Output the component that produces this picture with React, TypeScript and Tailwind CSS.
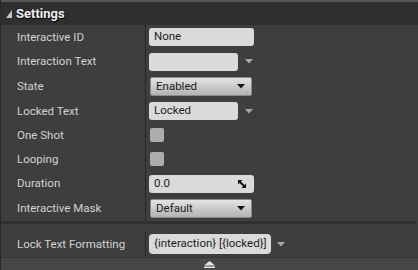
import React from "react";

const Arrow = ({ color = "#a8a8a8" }: { color?: string }) => (
  <svg width="8" height="5" viewBox="0 0 8 5" className="shrink-0">
    <polygon points="0,0 8,0 4,4.5" fill={color} />
  </svg>
);

const TextField = ({ text, w }: { text: string; w: string }) => (
  <div className={`h-[18px] ${w} rounded-[3px] bg-[#dadada] flex items-center px-[5px] text-[11.5px] text-[#1c1c1c]`}>
    {text}
  </div>
);

const Combo = ({ text }: { text: string }) => (
  <div className="h-[19px] w-[102px] ml-[1px] rounded-[2px] bg-gradient-to-b from-[#e4e4e4] to-[#b2b2b2] border border-[#8a8a8a] flex items-center justify-between pl-[5px] pr-[6px] text-[11.5px] text-[#1c1c1c]">
    <span>{text}</span>
    <Arrow color="#111" />
  </div>
);

const Check = () => <div className="w-[14px] h-[14px] ml-[1px] rounded-[2px] bg-[#adadad]" />;

const rows: { label: string; h: string; value: React.ReactNode }[] = [
  { label: "Interactive ID", h: "h-[24px]", value: <TextField text="None" w="w-[105px]" /> },
  {
    label: "Interaction Text",
    h: "h-[25px]",
    value: (
      <div className="flex items-center gap-[7px]">
        <TextField text="" w="w-[89px]" />
        <Arrow />
      </div>
    ),
  },
  { label: "State", h: "h-[25px]", value: <Combo text="Enabled" /> },
  {
    label: "Locked Text",
    h: "h-[24px]",
    value: (
      <div className="flex items-center gap-[7px]">
        <TextField text="Locked" w="w-[89px]" />
        <Arrow />
      </div>
    ),
  },
  { label: "One Shot", h: "h-[24px]", value: <Check /> },
  { label: "Looping", h: "h-[24px]", value: <Check /> },
  {
    label: "Duration",
    h: "h-[25px]",
    value: (
      <div className="h-[18px] w-[105px] rounded-[3px] bg-[#dadada] flex items-center justify-between pl-[5px] pr-[8px] text-[11.5px] text-[#1c1c1c]">
        <span>0.0</span>
        <svg width="8" height="8" viewBox="0 0 8 8">
          <polygon points="0,0 4.5,0 0,4.5" fill="#111" />
          <polygon points="8,8 3.5,8 8,3.5" fill="#111" />
          <line x1="1" y1="1" x2="7" y2="7" stroke="#111" strokeWidth="2" />
        </svg>
      </div>
    ),
  },
  { label: "Interactive Mask", h: "h-[25px]", value: <Combo text="Default" /> },
];

export default function App() {
  return (
    <div
      className="w-[418px] h-[270px] bg-[#3e3e3e] flex flex-col overflow-hidden border-l border-[#2a2a2a]"
      style={{ fontFamily: "Roboto, 'Liberation Sans', sans-serif" }}
    >
      <div className="h-[2px] bg-[#585858]" />
      <div className="h-[23px] bg-[#2f2f2f] flex items-center pl-[5px]">
        <svg width="6" height="8" viewBox="0 0 6 8" className="mr-[4px] mt-[1px]">
          <polygon points="6,0 6,8 0,8" fill="#c4c4c4" />
        </svg>
        <span
          className="text-[13px] font-bold text-[#f0f0f0]"
          style={{ textShadow: "1px 1px 1px #000" }}
        >
          Settings
        </span>
      </div>
      <div className="flex flex-col">
        {rows.map((r) => (
          <div key={r.label} className={`flex ${r.h}`}>
            <div className="w-[145px] pl-[16px] pt-[1px] flex items-center text-[11.5px] text-[#d2d2d2] border-r border-[#262626]">
              {r.label}
            </div>
            <div className="flex items-center pl-[3px]">{r.value}</div>
          </div>
        ))}
      </div>
      <div className="h-[1px] bg-[#333333] mr-[2px]" />
      <div className="h-[2px] bg-gradient-to-b from-[#2a2a2a] to-[#363636] mr-[2px]" />
      <div className="flex h-[24px] mt-[8px]">
        <div className="w-[145px] pl-[16px] pt-[1px] flex items-center text-[11.5px] text-[#d2d2d2] border-r border-[#262626]">
          Lock Text Formatting
        </div>
        <div className="flex items-center pl-[3px] gap-[6px]">
          <div className="h-[20px] w-[122px] rounded-[4px] bg-[#dadada] flex items-center px-[5px] text-[11.5px] text-[#1c1c1c] whitespace-nowrap">
            {"{interaction} [{locked}]"}
          </div>
          <Arrow />
        </div>
      </div>
      <div className="h-[1px] mt-[1px] bg-[#353535]" />
      <div className="flex-1 bg-[#474747] flex justify-center items-center">
        <svg width="11" height="7" viewBox="0 0 11 7" className="-ml-[1px] mt-[1px]">
          <polygon points="5.5,0 11,4.5 0,4.5" fill="#e6e6e6" />
          <rect x="0" y="5.5" width="11" height="1.5" fill="#e6e6e6" />
        </svg>
      </div>
    </div>
  );
}
